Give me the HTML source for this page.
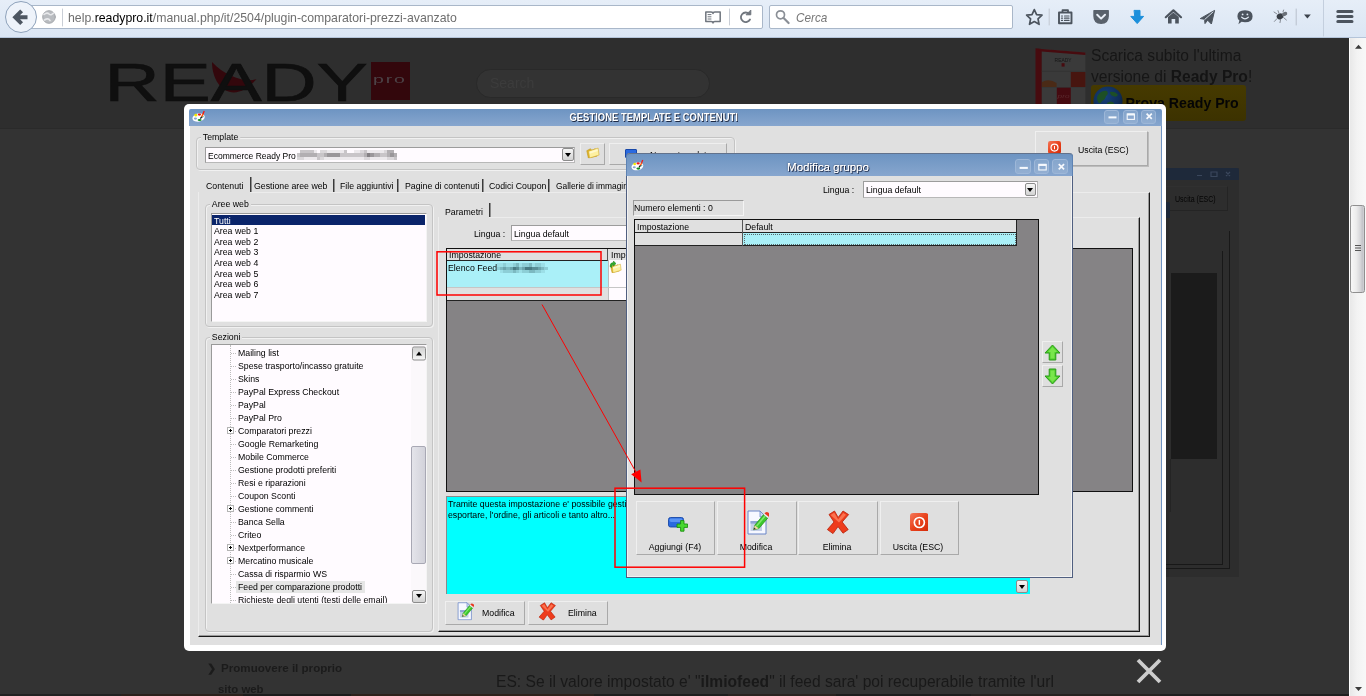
<!DOCTYPE html>
<html lang="it">
<head>
<meta charset="utf-8">
<title>Plugin comparatori prezzi avanzato</title>
<style>
*{box-sizing:border-box;margin:0;padding:0}
html,body{width:1366px;height:696px;overflow:hidden;background:#333;font-family:"Liberation Sans",sans-serif;}
.abs{position:absolute}
#root{position:relative;width:1366px;height:696px;overflow:hidden;background:#333;will-change:transform}
/* ---------- browser chrome ---------- */
#chrome{left:0;top:0;width:1366px;height:37.6px;background:linear-gradient(#e6eef8,#dbe6f4);border-bottom:1px solid #b4c4d9}
#urlbar{left:30px;top:5px;width:733px;height:24px;background:#fff;border:1px solid #a9b7c9;border-radius:2px}
#back{left:5px;top:1px;width:32px;height:32px;border-radius:50%;background:#eef3fa;border:1px solid #8ea2bb}
#url{left:68px;top:9.5px;font-size:13.4px;line-height:15px;color:#6e6e6e;white-space:nowrap;transform:scaleX(.918);transform-origin:0 50%}
#url b{color:#000;font-weight:normal}
#search{left:769px;top:5px;width:244px;height:24px;background:#fff;border:1px solid #a9b7c9;border-radius:2px}
#cerca{left:796px;top:9.5px;font-size:12.8px;line-height:15px;color:#777;font-style:italic;transform:scaleX(.92);transform-origin:0 50%}
/* ---------- page (dimmed) ---------- */
#hdr{left:0;top:37px;width:1349px;height:91.6px;background:#2e2e2e;border-bottom:1px solid #2a2a2a}
#vscroll{left:1349px;top:37px;width:17px;height:659px;background:linear-gradient(90deg,#fff 0,#fff 1px,#e9e9e9 1.5px,#f3f3f3 8px,#f8f8f8)}
#vthumb{left:1350.4px;top:204.7px;width:14.6px;height:88.8px;background:linear-gradient(90deg,#f7f7f7 0,#ececec 40%,#d6d6d9 72%,#c4c4c9 88%,#d2d2d6 100%);border:1px solid #8f8f8f;border-radius:2.5px}

/* page content (dimmed) */
#logo{left:100px;top:50px;width:320px;height:60px}
#probox{left:371px;top:61.6px;width:39px;height:38.4px;background:#33070c}
#probox span{position:absolute;left:2px;top:10.5px;font-size:11.6px;line-height:13px;color:#4c4246;letter-spacing:1.1px;transform:scaleX(1.68);transform-origin:0 0}
#sbox{left:476px;top:69px;width:234px;height:29px;border-radius:15px;background:#333;border:1px solid #292929}
#sbox span{position:absolute;left:13px;top:5px;font-size:14px;color:#3c3c3c}
#bn1{left:1091px;top:45px;font-size:15.6px;line-height:21px;color:#161616;white-space:nowrap}
#bn1 b{color:#141414}
#ybtn{left:1091.4px;top:85.3px;width:154.8px;height:35.4px;background:linear-gradient(#463a00,#3c3200);border-radius:3px}
#ybtn span{position:absolute;left:34.2px;top:9.7px;font-size:14.15px;line-height:17px;font-weight:bold;color:#050505;white-space:nowrap}
#globe{left:1093.2px;top:86.2px;width:30px;height:30px}
#pbox{left:1035px;top:48px;width:51px;height:60px}
#side1{left:221px;top:660.5px;font-size:11.6px;line-height:14px;font-weight:bold;color:#1b1b1b;white-space:nowrap}
#sidea{left:206.5px;top:660.5px;font-size:11px;line-height:14px;font-weight:bold;color:#1b1b1b}
#side2{left:218px;top:681.5px;font-size:11.4px;line-height:14px;font-weight:bold;color:#1b1b1b;white-space:nowrap}
#es{left:496px;top:672.6px;font-size:15.62px;color:#191919;white-space:nowrap}
#ttl1{text-align:center;overflow:visible}
#ttl1 span{display:inline-block;font-size:11.2px;font-weight:bold;color:#fff;white-space:nowrap;transform:scaleX(.845);transform-origin:50% 50%;text-shadow:1px 1px 0 #1f2b45,1px 0 0 rgba(31,43,69,.5);line-height:13px;margin:0 -60px}
#ttl2 span{font-size:11.5px;font-weight:normal;color:#fff;white-space:nowrap;text-shadow:1px 1px 0 #22304e,.4px 0 0 #fff,0 0 2px #2c3b5a;line-height:14px}
#lbx{left:1136px;top:658px;width:26px;height:26px}
#dim{left:1166px;top:168px;width:73px;height:409px;background:#2d2d2d;overflow:hidden}
/* ---------- lightbox ---------- */
#lb{left:184px;top:104px;width:982px;height:547px;background:#fff;border-radius:5px}
#win{left:190px;top:109px;width:971px;height:536.4px;background:#e0e0e0;overflow:hidden;font-size:11px;color:#000}
.t{position:absolute;white-space:nowrap;font-size:11px;line-height:13px;color:#000}

/* ---------- app windows ---------- */
.tb{background:linear-gradient(#6d94c2,#7a9dc8 50%,#87a6ce);}
.t{position:absolute;white-space:nowrap;font-size:9.6px;line-height:11px;color:#000;transform:scaleX(.912);transform-origin:0 50%}
.t.c{transform-origin:50% 50%}
.fs{position:absolute;border:1px solid #c4c4c4;border-radius:4px;box-shadow:inset 1px 1px 0 #f1f1f1,1px 1px 0 #f1f1f1}
.lg{position:absolute;background:#e0e0e0;padding:0 2px;font-size:9.6px;line-height:11px;white-space:nowrap;transform:scaleX(.912);transform-origin:0 50%}
.btn{position:absolute;background:#dfdfdf;border:1px solid;border-color:#efefef #a9a9a9 #a9a9a9 #efefef}
.wb{position:absolute;width:15px;height:14px;border:1px solid #9db7d8;border-radius:3px;background:rgba(255,255,255,.13)}
.sunk{position:absolute;border:1px solid;border-color:#9a9a9a #f4f4f4 #f4f4f4 #9a9a9a}
.white{background:#fffbff}
.vsep{position:absolute;width:2px;border-left:1px solid #3a3a3a;border-right:1px solid #8e8e8e}
.ddb{position:absolute;width:12px;height:13px;background:linear-gradient(#f6f6f6,#d2d2d2);border:1px solid #8c8c8c;border-radius:2px}
.ddb:after{content:"";position:absolute;left:calc(50% - 3px);top:calc(50% - 2px);border:3px solid transparent;border-top:4px solid #000;border-bottom:0}
</style>
</head>
<body>
<div id="root">

  <svg width="0" height="0" style="position:absolute">
    <defs>
      <symbol id="i-pal" viewBox="0 0 14 13">
        <ellipse cx="6.6" cy="7.6" rx="6.2" ry="4.1" transform="rotate(-12 6.6 7.6)" fill="#fff"/>
        <ellipse cx="3.4" cy="8.6" rx="1.6" ry="1.1" fill="#8aa6cc"/>
        <circle cx="3.8" cy="5.2" r="1.4" fill="#f2e800"/>
        <ellipse cx="7.4" cy="4.6" rx="1.7" ry="1.1" fill="#f01818"/>
        <ellipse cx="7.6" cy="10" rx="2" ry="1.1" fill="#128a22"/>
        <path d="M8.4 8.6 L10 6.4" stroke="#111" stroke-width="1.3"/>
        <path d="M9.8 6.8 L11.2 3.6" stroke="#ff5a10" stroke-width="1.6"/>
        <path d="M11 4 L12.2 1" stroke="#f01818" stroke-width="1.3"/>
        <path d="M10.6 7.6 L11.4 6.4" stroke="#10a0a0" stroke-width="1"/>
      </symbol>
      <symbol id="i-fold" viewBox="0 0 18 16">
        <path d="M1 6 L5.5 3.6 L7.6 5.4 L12 3.4 L13 5 L14 13 L3 15.4Z" fill="#e2b62a" stroke="#b89018" stroke-width=".7"/>
        <path d="M3.4 6.6 L15.6 2.6 L16.8 11.6 L4.6 15.4Z" fill="#fdf0a0" stroke="#d0a828" stroke-width=".7"/>
        <path d="M4.4 7.4 L14.8 4 L15.2 6.4 L4.8 9.8Z" fill="#fffad8" opacity=".8"/>
      </symbol>
      <symbol id="i-exit" viewBox="0 0 13 13">
        <defs><linearGradient id="gex" x1="0" y1="0" x2="1" y2="1"><stop offset="0" stop-color="#f5785a"/><stop offset=".5" stop-color="#e8421c"/><stop offset="1" stop-color="#d42a08"/></linearGradient></defs>
        <rect x="0" y="0" width="13" height="13" rx="2.2" fill="url(#gex)"/>
        <circle cx="6.5" cy="6.6" r="3.5" fill="none" stroke="#fff" stroke-width="1.15"/>
        <rect x="6" y="4.9" width="1" height="3.3" fill="#fff"/>
      </symbol>
      <symbol id="i-x" viewBox="0 0 24 24">
        <path d="M3 4.5 L8.5 1 L12.2 7.4 L17 1 L22.6 4.6 L16.2 12 L22.2 19.6 L17 23.2 L12 16.6 L7 23.6 L1.4 19.6 L8 12Z" fill="#ee3c1c" stroke="#b82008" stroke-width=".8" stroke-linejoin="round"/>
        <path d="M4.6 5 L8.2 2.8 L12.2 9.6 L17.2 3 L20 4.8 L13 12.6Z" fill="#ff8460" opacity=".75"/>
      </symbol>
      <symbol id="i-mod" viewBox="0 0 22 25">
        <path d="M1 1 H13 L19 7 V24 H1Z" fill="#f6f8ff" stroke="#6a86c8" stroke-width="1"/>
        <path d="M13 1 V7 H19Z" fill="#c8d6f2" stroke="#6a86c8" stroke-width=".8"/>
        <rect x="3.5" y="11" width="11.5" height="10" fill="#c4cfe8"/>
        <rect x="3.5" y="11" width="11.5" height="2.6" fill="#8ea4d4"/>
        <path d="M6.6 19.8 L7.8 15.2 L16.6 4.6 L20.8 8 L11.8 18.6Z" fill="#3cc82c" stroke="#1c8a14" stroke-width=".7"/>
        <path d="M9 15.6 L17.4 5.6 L18.6 6.6 L10.2 16.6Z" fill="#8ff07a" opacity=".8"/>
        <path d="M16.6 4.6 L17.6 3.4 L21.8 6.8 L20.8 8Z" fill="#f4f4f4" stroke="#aaa" stroke-width=".3"/>
        <path d="M17.6 3.4 L18.4 2.4 Q20 1.4 21.6 2.8 Q23 4.4 22.4 5.8 L21.8 6.8Z" fill="#e83820"/>
        <path d="M6.6 19.8 L7.8 15.2 L11.8 18.6Z" fill="#f0d8a0"/>
        <path d="M6.6 19.8 L7.2 17.6 L8.8 19Z" fill="#333"/>
      </symbol>
      <symbol id="i-add" viewBox="0 0 20 15">
        <rect x=".5" y=".5" width="15" height="9.5" rx="2" fill="#2a6ae0" stroke="#1848a8" stroke-width=".9"/>
        <rect x="1.6" y="1.4" width="12.8" height="3.6" rx="1.4" fill="#5a94f4"/>
        <path d="M12.6 3.6 H16 V7 H19.6 V10.4 H16 V14.2 H12.6 V10.4 H9 V7 H12.6Z" fill="#48d830" stroke="#1c9010" stroke-width=".9"/>
      </symbol>
    </defs>
  </svg>
  <div id="hdr" class="abs"></div>
  <div id="vscroll" class="abs"></div>
  <div id="vthumb" class="abs"></div>
  <svg class="abs" style="left:1349px;top:37px;width:17px;height:659px" viewBox="0 0 17 659"><path d="M6 11.8 L9.5 7.8 L13 11.8Z M6 650 L9.5 654 L13 650Z" fill="#3c3c3c"/><path d="M6 208.5 H12 M6 211 H12 M6 213.5 H12" stroke="#555" stroke-width="1"/></svg>

  <!-- dimmed page content -->
  <svg id="logo" class="abs" viewBox="100 50 320 60">
    <path d="M212 62 C212 88 234 106 256.5 79 C246 83 226 77 212 62Z" fill="#33070c"/>
    <text x="104.6" y="100.6" font-family="Liberation Sans, sans-serif" font-size="54" fill="#0f0f0f" stroke="#0f0f0f" stroke-width=".7" textLength="263" lengthAdjust="spacingAndGlyphs">READY</text>
  </svg>
  <div id="probox" class="abs"><span>pro</span></div>
  <div id="sbox" class="abs"><span>Search</span></div>
  <svg id="pbox" class="abs" viewBox="1035 48 51 60">
    <polygon points="1035.5,48.5 1041.8,49 1041.8,108 1035.5,108" fill="#470b0f"/>
    <polygon points="1041.8,49 1085.4,52.6 1085.4,108 1041.8,108" fill="#3a3a3a"/>
    <polygon points="1035.5,48.5 1085.4,52.4 1085.4,55 1041.8,51.6" fill="#470b0f"/>
    <rect x="1041.8" y="70.8" width="43.6" height="1" fill="#333"/>
    <rect x="1070.8" y="72" width="14.6" height="15" fill="#47150f"/>
    <path d="M1042 82 Q1049 78 1056.6 83 V87 H1042Z" fill="#4a2a16"/>
    <rect x="1056.8" y="87.2" width="14" height="20.8" fill="#450a10"/>
    <rect x="1041.8" y="87" width="43.6" height=".6" fill="#343434"/>
    <text x="1054.6" y="62.4" font-family="Liberation Sans, sans-serif" font-size="5.2" fill="#161616" textLength="17" lengthAdjust="spacingAndGlyphs">READY</text>
    <rect x="1061.6" y="63.2" width="3" height="3.4" fill="#470b0f"/>
    <text x="1057.6" y="97.6" font-family="Liberation Sans, sans-serif" font-size="6" font-style="italic" fill="#5a2a2e" textLength="12" lengthAdjust="spacingAndGlyphs">pro</text>
  </svg>
  <div id="bn1" class="abs">Scarica subito l'ultima<br>versione di <b>Ready Pro</b>!</div>
  <div id="ybtn" class="abs"><span>Prova Ready Pro</span></div>
  <svg id="globe" class="abs" viewBox="0 0 30 30"><defs><radialGradient id="gg" cx=".4" cy=".35" r=".7"><stop offset="0" stop-color="#16407a"/><stop offset=".7" stop-color="#0f2d58"/><stop offset="1" stop-color="#0a1c38"/></radialGradient></defs><circle cx="15" cy="15" r="14.6" fill="url(#gg)"/><path d="M5 9 Q9 4 14 5 Q16 8 13 10 Q12 14 9 15 Q7 19 5 16 Q3 12 5 9Z M17 6 Q22 5 25 9 Q23 12 20 10 Q17 9 17 6Z M14 17 Q18 14 21 17 Q22 22 18 26 Q15 24 14 17Z" fill="#1d4f26"/></svg>
  <div id="sidea" class="abs">&#10095;</div>
  <div id="side1" class="abs">Promuovere il proprio</div>
  <div id="side2" class="abs">sito web</div>
  <div id="es" class="abs">ES: Se il valore impostato e' "<b>ilmiofeed</b>" il feed sara' poi recuperabile tramite l'url</div>
  <svg id="lbx" class="abs" viewBox="0 0 26 26"><path d="M2 2 L24 24 M24 2 L2 24" stroke="#cdcdcd" stroke-width="3.8" fill="none"/></svg>
  <div class="abs" style="left:0;top:694px;width:1349px;height:2px;background:linear-gradient(90deg,#222 0,#222 9%,#2b211c 9%,#2b211c 18%,#1c1c1c 18%,#1c1c1c 26%,#2e221c 26%,#2e221c 44%,#1e1e1e 44%,#1e1e1e 54%,#2a2320 54%,#2a2320 62%,#1d1d1d 62%,#1d1d1d 72%,#262220 72%,#262220 86%,#1f1f1f 86%)"></div>
  <div id="dim" class="abs">
    <div class="abs" style="left:0;top:0;width:73px;height:12px;background:#1e293a;border-radius:0 2px 0 0"></div>
    <svg class="abs" style="left:28px;top:1px;width:40px;height:10px" viewBox="0 0 40 10"><path d="M3 6.5 H8 M17 3 H23 V7.5 H17Z M32 3 L36 7 M36 3 L32 7" stroke="#3a475c" stroke-width="1.2" fill="none"/></svg>
    <div class="abs" style="left:-40px;top:18px;width:102px;height:25px;border:1px solid #262626;border-color:#303030 #242424 #242424 #303030"></div>
    <div class="t" style="left:9px;top:25.5px;color:#050505;font-size:8.6px;transform:scaleX(.82)">Uscita (ESC)</div>
    <div class="abs" style="left:0;top:34px;width:4px;height:16px;background:#1c2738;border-radius:0 2px 0 0"></div>
    <div class="abs" style="left:0;top:50px;width:3px;height:360px;background:#2a2a2a"></div>
    <div class="abs" style="left:63px;top:63px;width:1px;height:338px;background:#181818"></div>
    <div class="abs" style="left:-10px;top:400px;width:74px;height:1px;background:#181818"></div>
    <div class="abs" style="left:56px;top:83px;width:1px;height:314px;background:#181818"></div>
    <div class="abs" style="left:-10px;top:396px;width:67px;height:1px;background:#181818"></div>
    <div class="abs" style="left:4.5px;top:105px;width:46.5px;height:186px;background:#1b1b1b"></div>
    <div class="abs" style="left:0;top:291px;width:5px;height:53px;background:#2a2a2a;border-right:1px solid #242424"></div>
  </div>
  <div id="chrome" class="abs">
    <div id="urlbar" class="abs"></div>
    <div id="back" class="abs"></div>
    <div id="url" class="abs">help.<b>readypro.it</b>/manual.php/it/2504/plugin-comparatori-prezzi-avanzato</div>
    <div id="search" class="abs"></div>
    <div id="cerca" class="abs">Cerca</div>
    <svg class="abs" style="left:0;top:0;width:1366px;height:37px" viewBox="0 0 1366 37">
      <g fill="none" stroke="#4c545e" stroke-width="1.6" stroke-linejoin="round" stroke-linecap="round">
        <!-- back arrow -->
        <path d="M27.5 17.2 H16.5 M21.6 10.8 L15.2 17.2 L21.6 23.6" stroke-width="4" stroke="#4d5661" stroke-linecap="butt" stroke-linejoin="miter"/>
        <!-- globe -->
        <circle cx="49" cy="17" r="6.3" fill="#b9bcc0" stroke="#a7aaae" stroke-width="1"/>
        <path d="M44 14.5 Q47 12 49 14 T53.5 13 M44.5 20 Q48 17.5 50 20.5" stroke="#e8e9eb" stroke-width="1.6"/>
        <path d="M62.5 9 V26" stroke="#c9ced6" stroke-width="1"/>
        <!-- reader -->
        <path d="M705.8 12 H711 Q713 12 713 13.5 Q713 12 715 12 H720.2 V21.5 H715 Q713 21.5 713 23 Q713 21.5 711 21.5 H705.8Z" stroke-width="1.5" stroke="#70767e"/>
        <path d="M708 14.6 H711 M708 16.8 H711 M708 19 H711" stroke-width="1" stroke="#70767e"/>
        <path d="M729.5 9 V25" stroke="#c9ced6" stroke-width="1"/>
        <!-- reload -->
        <path d="M749.2 14 A4.8 4.8 0 1 0 750 19.5" stroke="#70767e" stroke-width="1.8"/>
        <path d="M746.4 14.8 H750.8 V10.4Z" fill="#70767e" stroke="#70767e" stroke-width="1"/>
        <!-- magnifier -->
        <circle cx="780.5" cy="14.8" r="4" stroke="#8a8f96" stroke-width="1.7"/>
        <path d="M783.6 18 L788.6 23" stroke="#8a8f96" stroke-width="2.2"/>
        <!-- star -->
        <path d="M1034.3 9.6 L1036.6 14.6 L1042 15.2 L1038 18.9 L1039.1 24.3 L1034.3 21.6 L1029.5 24.3 L1030.6 18.9 L1026.6 15.2 L1032 14.6Z" stroke-width="1.7"/>
        <path d="M1049.2 9 V25" stroke="#c3c9d2" stroke-width="1"/>
        <!-- clipboard -->
        <path d="M1059 12.5 H1071.5 V23.3 H1059Z" stroke-width="1.9"/>
        <path d="M1062.5 12 V10.2 H1068 V12" stroke-width="1.8"/>
        <path d="M1061.5 16 H1062.5 M1064.5 16 H1069 M1061.5 18.2 H1062.5 M1064.5 18.2 H1069 M1061.5 20.4 H1062.5 M1064.5 20.4 H1069" stroke-width="1.2"/>
        <!-- pocket -->
        <path d="M1094 10.6 H1108.2 V16 Q1108.2 23.2 1101.1 23.2 Q1094 23.2 1094 16Z" fill="#59616b" stroke="#59616b" stroke-width="1.4"/>
        <path d="M1097.2 14.8 L1101.1 18.6 L1105 14.8" stroke="#e8eef6" stroke-width="2"/>
        <!-- download -->
        <path d="M1134.4 10.4 H1140 V16.4 H1143.6 L1137.2 23.6 L1130.8 16.4 H1134.4Z" fill="#1b8fdb" stroke="#1b8fdb" stroke-width="1"/>
        <!-- home -->
        <path d="M1165.8 17.2 L1173.4 10.4 L1181 17.2" stroke-width="2.2"/>
        <path d="M1168 17 L1173.4 12.6 L1178.8 17 V23.6 H1175.2 V19 H1171.6 V23.6 H1168Z" fill="#4c545e" stroke="none"/>
        <!-- send -->
        <path d="M1200.6 18.4 L1214.6 10.4 L1211.4 24 L1207.6 20.2 L1205 23.6 L1204.6 19.6Z" fill="#4c545e" stroke="#4c545e" stroke-width="1"/>
        <path d="M1204.8 19.4 L1213 12" stroke="#e3ecf6" stroke-width=".9"/>
        <!-- chat -->
        <path d="M1245 10.2 Q1252.6 10.2 1252.6 16.2 Q1252.6 22.2 1245 22.2 Q1243 22.2 1241.6 21.8 L1238.4 24.2 L1239.4 20.6 Q1237.4 19 1237.4 16.2 Q1237.4 10.2 1245 10.2Z" fill="#4c545e" stroke="none"/>
        <path d="M1241.6 17.2 Q1245 20.6 1248.4 17.2" stroke="#e3ecf6" stroke-width="1.2"/>
        <circle cx="1242.6" cy="14.4" r=".9" fill="#e3ecf6" stroke="none"/><circle cx="1247.4" cy="14.4" r=".9" fill="#e3ecf6" stroke="none"/>
        <!-- bug -->
        <ellipse cx="1280" cy="16.4" rx="3.4" ry="2.8" fill="#3a3f46" stroke="none" transform="rotate(-25 1280 16.4)"/>
        <ellipse cx="1284.6" cy="14" rx="2.8" ry="2" fill="#6a7078" stroke="none" transform="rotate(-25 1284.6 14)"/>
        <path d="M1277 14 L1274 12 M1277 18.6 L1274.4 21.4 M1280.6 19.4 L1280 22.6 M1279 13.4 L1278 10.6 M1283.6 17.6 L1286.4 20 M1283 11.8 L1283.6 10" stroke="#7a8088" stroke-width=".9"/>
        <path d="M1296.2 9 V25" stroke="#b8c0cc" stroke-width="1"/>
        <path d="M1304 14.6 H1310.8 L1307.4 18.6Z" fill="#3c434c" stroke="none"/>
        <path d="M1323.5 0 V36" stroke="#c4cfde" stroke-width="1"/>
        <!-- hamburger -->
        <path d="M1337.8 11.6 H1352 M1337.8 16.6 H1352 M1337.8 21.6 H1352" stroke-width="3"/>
        <!-- scroll arrows -->
      </g>
    </svg>
  </div>
  <div id="lb" class="abs"></div>
  <div id="win" class="abs"></div>

  <!-- main window -->
  <div class="abs tb" style="left:189px;top:109px;width:973px;height:17.2px;border-radius:2px 2px 0 0"></div>
  <div class="abs" style="left:1160.8px;top:126px;width:1.2px;height:519.4px;background:#6f93c2"></div>
  <div class="abs" id="ttl1" style="left:569px;top:107.2px;width:170px;height:13px"><span>GESTIONE TEMPLATE E CONTENUTI</span></div>
  <div class="wb" style="left:1104px;top:110px"></div>
  <div class="wb" style="left:1123px;top:110px"></div>
  <div class="wb" style="left:1141px;top:110px"></div>
  <div class="fs" style="left:196px;top:137px;width:539px;height:33px"></div>
  <div class="lg" style="left:201px;top:131px">Template</div>
  <div class="sunk white" style="left:205px;top:146.7px;width:370px;height:16px;border-color:#9c9c9c #b8b8b8 #b8b8b8 #9c9c9c"></div>
  <div class="t" style="left:208px;top:149.6px;transform:scaleX(.885)">Ecommerce Ready Pro</div>
  <div class="ddb" style="left:562px;top:148px"></div>
  <div class="btn" style="left:580px;top:143px;width:25px;height:22px"></div>
  <div class="btn" style="left:609px;top:143px;width:118px;height:22px"></div>
  <div class="t" style="left:650px;top:149.3px">Nuovo template</div>
  <div class="btn" style="left:1034.5px;top:131px;width:113.5px;height:35px;box-shadow:1px 1px 0 #bcbcbc"></div>
  <div class="t" style="left:1078px;top:144px">Uscita (ESC)</div>
  <div class="t" style="left:206px;top:180px">Contenuti</div>
  <div class="t" style="left:254px;top:180px">Gestione aree web</div>
  <div class="t" style="left:340px;top:180px">File aggiuntivi</div>
  <div class="t" style="left:404.5px;top:180px">Pagine di contenuti</div>
  <div class="t" style="left:488.5px;top:180px">Codici Coupon</div>
  <div class="t" style="left:556px;top:180px;transform:scaleX(.875)">Gallerie di immagini</div>
  <div class="vsep" style="left:250px;top:177px;height:15px"></div>
  <div class="vsep" style="left:333px;top:179px;height:13px"></div>
  <div class="vsep" style="left:397px;top:179px;height:13px"></div>
  <div class="vsep" style="left:482px;top:179px;height:13px"></div>
  <div class="vsep" style="left:548px;top:179px;height:13px"></div>
  <div class="abs" style="left:198px;top:192px;width:952px;height:444.5px;border:1px solid;border-color:#ececec #1a1a1a #1a1a1a #ececec;box-shadow:inset -1px -1px 0 #9a9a9a"></div>
  <div class="abs" style="left:199px;top:190px;width:51px;height:4px;background:#e0e0e0"></div>
  <div class="fs" style="left:205px;top:204px;width:228px;height:123px"></div>
  <div class="lg" style="left:210px;top:198px">Aree web</div>
  <div class="sunk white" style="left:211px;top:213px;width:216px;height:109px"></div>
  <div class="abs" style="left:212px;top:215px;width:213px;height:10px;background:#0a246a"></div>
  <div class="t" style="left:213.5px;top:214.5px;color:#fff">Tutti</div>
  <div class="t" style="left:213.5px;top:225.1px">Area web 1</div>
  <div class="t" style="left:213.5px;top:235.7px">Area web 2</div>
  <div class="t" style="left:213.5px;top:246.3px">Area web 3</div>
  <div class="t" style="left:213.5px;top:256.9px">Area web 4</div>
  <div class="t" style="left:213.5px;top:267.5px">Area web 5</div>
  <div class="t" style="left:213.5px;top:278.1px">Area web 6</div>
  <div class="t" style="left:213.5px;top:288.7px">Area web 7</div>
  <div class="fs" style="left:205px;top:337px;width:228px;height:294.5px"></div>
  <div class="lg" style="left:210px;top:331px">Sezioni</div>
  <div class="sunk white" style="left:211px;top:344px;width:216px;height:260px;overflow:hidden" id="tree">
  <div class="abs" style="left:18px;top:0;width:0;height:260px;border-left:1px dotted #bdbdbd"></div>
  <div class="abs" style="left:19px;top:7.7px;width:5px;height:0;border-top:1px dotted #bdbdbd"></div>
  <div class="t" style="left:26px;top:2.2px">Mailing list</div>
  <div class="abs" style="left:19px;top:20.7px;width:5px;height:0;border-top:1px dotted #bdbdbd"></div>
  <div class="t" style="left:26px;top:15.2px">Spese trasporto/incasso gratuite</div>
  <div class="abs" style="left:19px;top:33.7px;width:5px;height:0;border-top:1px dotted #bdbdbd"></div>
  <div class="t" style="left:26px;top:28.2px">Skins</div>
  <div class="abs" style="left:19px;top:46.7px;width:5px;height:0;border-top:1px dotted #bdbdbd"></div>
  <div class="t" style="left:26px;top:41.2px">PayPal Express Checkout</div>
  <div class="abs" style="left:19px;top:59.7px;width:5px;height:0;border-top:1px dotted #bdbdbd"></div>
  <div class="t" style="left:26px;top:54.2px">PayPal</div>
  <div class="abs" style="left:19px;top:72.7px;width:5px;height:0;border-top:1px dotted #bdbdbd"></div>
  <div class="t" style="left:26px;top:67.2px">PayPal Pro</div>
  <div class="abs" style="left:19px;top:85.7px;width:5px;height:0;border-top:1px dotted #bdbdbd"></div>
  <div class="abs" style="left:15px;top:82.2px;width:7px;height:7px;background:#fff;border:1px solid #b4b4b4"></div>
  <div class="abs" style="left:17px;top:85.2px;width:3px;height:1px;background:#000"></div>
  <div class="abs" style="left:18px;top:84.2px;width:1px;height:3px;background:#000"></div>
  <div class="t" style="left:26px;top:80.2px">Comparatori prezzi</div>
  <div class="abs" style="left:19px;top:98.7px;width:5px;height:0;border-top:1px dotted #bdbdbd"></div>
  <div class="t" style="left:26px;top:93.2px">Google Remarketing</div>
  <div class="abs" style="left:19px;top:111.7px;width:5px;height:0;border-top:1px dotted #bdbdbd"></div>
  <div class="t" style="left:26px;top:106.2px">Mobile Commerce</div>
  <div class="abs" style="left:19px;top:124.7px;width:5px;height:0;border-top:1px dotted #bdbdbd"></div>
  <div class="t" style="left:26px;top:119.2px">Gestione prodotti preferiti</div>
  <div class="abs" style="left:19px;top:137.7px;width:5px;height:0;border-top:1px dotted #bdbdbd"></div>
  <div class="t" style="left:26px;top:132.2px">Resi e riparazioni</div>
  <div class="abs" style="left:19px;top:150.7px;width:5px;height:0;border-top:1px dotted #bdbdbd"></div>
  <div class="t" style="left:26px;top:145.2px">Coupon Sconti</div>
  <div class="abs" style="left:19px;top:163.7px;width:5px;height:0;border-top:1px dotted #bdbdbd"></div>
  <div class="abs" style="left:15px;top:160.2px;width:7px;height:7px;background:#fff;border:1px solid #b4b4b4"></div>
  <div class="abs" style="left:17px;top:163.2px;width:3px;height:1px;background:#000"></div>
  <div class="abs" style="left:18px;top:162.2px;width:1px;height:3px;background:#000"></div>
  <div class="t" style="left:26px;top:158.2px">Gestione commenti</div>
  <div class="abs" style="left:19px;top:176.7px;width:5px;height:0;border-top:1px dotted #bdbdbd"></div>
  <div class="t" style="left:26px;top:171.2px">Banca Sella</div>
  <div class="abs" style="left:19px;top:189.7px;width:5px;height:0;border-top:1px dotted #bdbdbd"></div>
  <div class="t" style="left:26px;top:184.2px">Criteo</div>
  <div class="abs" style="left:19px;top:202.7px;width:5px;height:0;border-top:1px dotted #bdbdbd"></div>
  <div class="abs" style="left:15px;top:199.2px;width:7px;height:7px;background:#fff;border:1px solid #b4b4b4"></div>
  <div class="abs" style="left:17px;top:202.2px;width:3px;height:1px;background:#000"></div>
  <div class="abs" style="left:18px;top:201.2px;width:1px;height:3px;background:#000"></div>
  <div class="t" style="left:26px;top:197.2px">Nextperformance</div>
  <div class="abs" style="left:19px;top:215.7px;width:5px;height:0;border-top:1px dotted #bdbdbd"></div>
  <div class="abs" style="left:15px;top:212.2px;width:7px;height:7px;background:#fff;border:1px solid #b4b4b4"></div>
  <div class="abs" style="left:17px;top:215.2px;width:3px;height:1px;background:#000"></div>
  <div class="abs" style="left:18px;top:214.2px;width:1px;height:3px;background:#000"></div>
  <div class="t" style="left:26px;top:210.2px">Mercatino musicale</div>
  <div class="abs" style="left:19px;top:228.7px;width:5px;height:0;border-top:1px dotted #bdbdbd"></div>
  <div class="t" style="left:26px;top:223.2px">Cassa di risparmio WS</div>
  <div class="abs" style="left:24px;top:235.7px;width:129px;height:12px;background:#e6e6e6"></div>
  <div class="abs" style="left:19px;top:241.7px;width:5px;height:0;border-top:1px dotted #bdbdbd"></div>
  <div class="t" style="left:26px;top:236.2px">Feed per comparazione prodotti</div>
  <div class="abs" style="left:19px;top:254.7px;width:5px;height:0;border-top:1px dotted #bdbdbd"></div>
  <div class="t" style="left:26px;top:249.2px">Richieste degli utenti (testi delle email)</div>
  <div class="abs" style="left:199px;top:0;width:16px;height:259px;background:#fbf8fb"></div>
  <div class="abs" style="left:199px;top:101px;width:15px;height:118px;background:linear-gradient(90deg,#e4e4ea,#d2d2da);border:1px solid #a8a8b4;border-radius:2px"></div>
  <div class="ddb" style="left:199.5px;top:1.5px;width:14px;height:13.5px;transform:rotate(180deg)"></div>
  <div class="ddb" style="left:199.5px;top:244.5px;width:14px;height:13.5px"></div>
  </div>
  <div class="t" style="left:445px;top:205.5px">Parametri</div>
  <div class="vsep" style="left:489px;top:203px;height:14px"></div>
  <div class="abs" style="left:438px;top:217px;width:702px;height:415px;border:1px solid;border-color:#ececec #1a1a1a #1a1a1a #ececec;box-shadow:inset -1px -1px 0 #9a9a9a"></div>
  <div class="abs" style="left:439px;top:215px;width:50px;height:4px;background:#e0e0e0"></div>
  <div class="t" style="left:474px;top:228px">Lingua :</div>
  <div class="sunk white" style="left:511px;top:224.5px;width:180px;height:16.5px;border-color:#9c9c9c #b8b8b8 #b8b8b8 #9c9c9c"></div>
  <div class="t" style="left:514px;top:228px">Lingua default</div>
  <div class="abs" style="left:446px;top:247.5px;width:687px;height:244px;background:#858385;border:1px solid #111"></div>
  <div class="abs" style="left:447px;top:248.5px;width:161px;height:12.5px;background:#e0e0e0;border-bottom:1px solid #222;border-right:1px solid #555"></div>
  <div class="abs" style="left:608px;top:248.5px;width:30px;height:12.5px;background:#e0e0e0;border-bottom:1px solid #222"></div>
  <div class="t" style="left:448.5px;top:249px">Impostazione</div>
  <div class="t" style="left:611px;top:249px">Imp</div>
  <div class="abs" style="left:447px;top:261px;width:161px;height:26px;background:#aaf0f8"></div>
  <div class="abs" style="left:608px;top:260px;width:30px;height:40px;background:#fffbff;border-left:1px solid #bdbdbd"></div>
  <div class="abs" style="left:447px;top:287px;width:161px;height:13px;background:#e0e0e0;border-top:1px solid #c6c6c6"></div>
  <div class="abs" style="left:608px;top:287px;width:30px;height:1px;background:#c6c6c6"></div>
  <div class="abs" style="left:447px;top:299.5px;width:190px;height:1px;background:#222"></div>
  <div class="t" style="left:447.8px;top:262px">Elenco Feed</div>
  <div class="abs" style="left:446px;top:495.5px;width:584px;height:98.5px;background:#00ffff;border-top:1px solid #8a8a8a;border-left:1px solid #8a8a8a"></div>
  <div class="t" style="left:447.5px;top:498px">Tramite questa impostazione e' possibile gestire</div>
  <div class="t" style="left:447.5px;top:509px">esportare, l'ordine, gli articoli e tanto altro...</div>
  <div class="ddb" style="left:1016px;top:580px"></div>
  <div class="btn" style="left:445px;top:601px;width:80px;height:24px"></div>
  <div class="t" style="left:481.5px;top:607px">Modifica</div>
  <div class="btn" style="left:528px;top:601px;width:80px;height:24px"></div>
  <div class="t" style="left:567.5px;top:607px">Elimina</div>

  <!-- blurred (pixelated) private text placeholders -->
  <svg class="abs" style="left:297px;top:150px;width:100px;height:10px" viewBox="0 0 100 10" shape-rendering="crispEdges"><rect x="3.33" y="0.00" width="3.63" height="3.63" fill="#c8c5c8"/><rect x="6.67" y="0.00" width="3.63" height="3.63" fill="#c8c5c8"/><rect x="10.00" y="0.00" width="3.63" height="3.63" fill="#c8c5c8"/><rect x="13.33" y="0.00" width="3.63" height="3.63" fill="#c8c5c8"/><rect x="16.67" y="0.00" width="3.63" height="3.63" fill="#ece9ec"/><rect x="23.33" y="0.00" width="3.63" height="3.63" fill="#dad7da"/><rect x="26.67" y="0.00" width="3.63" height="3.63" fill="#dad7da"/><rect x="30.00" y="0.00" width="3.63" height="3.63" fill="#ece9ec"/><rect x="33.33" y="0.00" width="3.63" height="3.63" fill="#ece9ec"/><rect x="36.67" y="0.00" width="3.63" height="3.63" fill="#ece9ec"/><rect x="40.00" y="0.00" width="3.63" height="3.63" fill="#ece9ec"/><rect x="43.33" y="0.00" width="3.63" height="3.63" fill="#ece9ec"/><rect x="46.67" y="0.00" width="3.63" height="3.63" fill="#c8c5c8"/><rect x="56.67" y="0.00" width="3.63" height="3.63" fill="#ece9ec"/><rect x="60.00" y="0.00" width="3.63" height="3.63" fill="#ece9ec"/><rect x="63.33" y="0.00" width="3.63" height="3.63" fill="#dad7da"/><rect x="66.67" y="0.00" width="3.63" height="3.63" fill="#c8c5c8"/><rect x="70.00" y="0.00" width="3.63" height="3.63" fill="#ece9ec"/><rect x="73.33" y="0.00" width="3.63" height="3.63" fill="#ece9ec"/><rect x="76.67" y="0.00" width="3.63" height="3.63" fill="#ece9ec"/><rect x="80.00" y="0.00" width="3.63" height="3.63" fill="#ece9ec"/><rect x="83.33" y="0.00" width="3.63" height="3.63" fill="#ece9ec"/><rect x="86.67" y="0.00" width="3.63" height="3.63" fill="#dad7da"/><rect x="90.00" y="0.00" width="3.63" height="3.63" fill="#b2afb2"/><rect x="93.33" y="0.00" width="3.63" height="3.63" fill="#b2afb2"/><rect x="0.00" y="3.33" width="3.63" height="3.63" fill="#c8c5c8"/><rect x="3.33" y="3.33" width="3.63" height="3.63" fill="#b2afb2"/><rect x="6.67" y="3.33" width="3.63" height="3.63" fill="#b2afb2"/><rect x="10.00" y="3.33" width="3.63" height="3.63" fill="#b2afb2"/><rect x="13.33" y="3.33" width="3.63" height="3.63" fill="#b2afb2"/><rect x="16.67" y="3.33" width="3.63" height="3.63" fill="#b2afb2"/><rect x="20.00" y="3.33" width="3.63" height="3.63" fill="#c8c5c8"/><rect x="23.33" y="3.33" width="3.63" height="3.63" fill="#c8c5c8"/><rect x="26.67" y="3.33" width="3.63" height="3.63" fill="#b2afb2"/><rect x="30.00" y="3.33" width="3.63" height="3.63" fill="#9a979a"/><rect x="33.33" y="3.33" width="3.63" height="3.63" fill="#9a979a"/><rect x="36.67" y="3.33" width="3.63" height="3.63" fill="#9a979a"/><rect x="40.00" y="3.33" width="3.63" height="3.63" fill="#9a979a"/><rect x="43.33" y="3.33" width="3.63" height="3.63" fill="#c8c5c8"/><rect x="46.67" y="3.33" width="3.63" height="3.63" fill="#c8c5c8"/><rect x="50.00" y="3.33" width="3.63" height="3.63" fill="#c8c5c8"/><rect x="53.33" y="3.33" width="3.63" height="3.63" fill="#c8c5c8"/><rect x="56.67" y="3.33" width="3.63" height="3.63" fill="#c8c5c8"/><rect x="60.00" y="3.33" width="3.63" height="3.63" fill="#c8c5c8"/><rect x="63.33" y="3.33" width="3.63" height="3.63" fill="#c8c5c8"/><rect x="66.67" y="3.33" width="3.63" height="3.63" fill="#b2afb2"/><rect x="70.00" y="3.33" width="3.63" height="3.63" fill="#848184"/><rect x="73.33" y="3.33" width="3.63" height="3.63" fill="#9a979a"/><rect x="76.67" y="3.33" width="3.63" height="3.63" fill="#b2afb2"/><rect x="80.00" y="3.33" width="3.63" height="3.63" fill="#b2afb2"/><rect x="83.33" y="3.33" width="3.63" height="3.63" fill="#c8c5c8"/><rect x="86.67" y="3.33" width="3.63" height="3.63" fill="#c8c5c8"/><rect x="90.00" y="3.33" width="3.63" height="3.63" fill="#b2afb2"/><rect x="93.33" y="3.33" width="3.63" height="3.63" fill="#9a979a"/><rect x="96.67" y="3.33" width="3.63" height="3.63" fill="#b2afb2"/><rect x="0.00" y="6.67" width="3.63" height="3.63" fill="#dad7da"/><rect x="3.33" y="6.67" width="3.63" height="3.63" fill="#dad7da"/><rect x="6.67" y="6.67" width="3.63" height="3.63" fill="#ece9ec"/><rect x="10.00" y="6.67" width="3.63" height="3.63" fill="#ece9ec"/><rect x="13.33" y="6.67" width="3.63" height="3.63" fill="#ece9ec"/><rect x="16.67" y="6.67" width="3.63" height="3.63" fill="#ece9ec"/><rect x="20.00" y="6.67" width="3.63" height="3.63" fill="#c8c5c8"/><rect x="23.33" y="6.67" width="3.63" height="3.63" fill="#dad7da"/><rect x="26.67" y="6.67" width="3.63" height="3.63" fill="#ece9ec"/><rect x="30.00" y="6.67" width="3.63" height="3.63" fill="#ece9ec"/><rect x="33.33" y="6.67" width="3.63" height="3.63" fill="#ece9ec"/><rect x="36.67" y="6.67" width="3.63" height="3.63" fill="#ece9ec"/><rect x="40.00" y="6.67" width="3.63" height="3.63" fill="#ece9ec"/><rect x="43.33" y="6.67" width="3.63" height="3.63" fill="#ece9ec"/><rect x="46.67" y="6.67" width="3.63" height="3.63" fill="#ece9ec"/><rect x="50.00" y="6.67" width="3.63" height="3.63" fill="#ece9ec"/><rect x="53.33" y="6.67" width="3.63" height="3.63" fill="#ece9ec"/><rect x="56.67" y="6.67" width="3.63" height="3.63" fill="#ece9ec"/><rect x="60.00" y="6.67" width="3.63" height="3.63" fill="#ece9ec"/><rect x="63.33" y="6.67" width="3.63" height="3.63" fill="#ece9ec"/><rect x="66.67" y="6.67" width="3.63" height="3.63" fill="#dad7da"/><rect x="70.00" y="6.67" width="3.63" height="3.63" fill="#dad7da"/><rect x="73.33" y="6.67" width="3.63" height="3.63" fill="#ece9ec"/><rect x="76.67" y="6.67" width="3.63" height="3.63" fill="#ece9ec"/><rect x="80.00" y="6.67" width="3.63" height="3.63" fill="#ece9ec"/><rect x="83.33" y="6.67" width="3.63" height="3.63" fill="#ece9ec"/><rect x="86.67" y="6.67" width="3.63" height="3.63" fill="#ece9ec"/><rect x="90.00" y="6.67" width="3.63" height="3.63" fill="#dad7da"/><rect x="93.33" y="6.67" width="3.63" height="3.63" fill="#dad7da"/><rect x="96.67" y="6.67" width="3.63" height="3.63" fill="#c8c5c8"/></svg>
  <svg class="abs" style="left:497px;top:262.6px;width:50.5px;height:10.5px" viewBox="0 0 50.5 10.5" shape-rendering="crispEdges"><rect x="0.00" y="0.00" width="3.46" height="3.80" fill="#9cdfe7"/><rect x="3.16" y="0.00" width="3.46" height="3.80" fill="#9cdfe7"/><rect x="6.31" y="0.00" width="3.46" height="3.80" fill="#8dced6"/><rect x="9.47" y="0.00" width="3.46" height="3.80" fill="#9cdfe7"/><rect x="12.62" y="0.00" width="3.46" height="3.80" fill="#9cdfe7"/><rect x="15.78" y="0.00" width="3.46" height="3.80" fill="#8dced6"/><rect x="18.94" y="0.00" width="3.46" height="3.80" fill="#7cb9c1"/><rect x="22.09" y="0.00" width="3.46" height="3.80" fill="#9cdfe7"/><rect x="25.25" y="0.00" width="3.46" height="3.80" fill="#8dced6"/><rect x="28.41" y="0.00" width="3.46" height="3.80" fill="#8dced6"/><rect x="31.56" y="0.00" width="3.46" height="3.80" fill="#7cb9c1"/><rect x="34.72" y="0.00" width="3.46" height="3.80" fill="#9cdfe7"/><rect x="37.88" y="0.00" width="3.46" height="3.80" fill="#8dced6"/><rect x="41.03" y="0.00" width="3.46" height="3.80" fill="#8dced6"/><rect x="44.19" y="0.00" width="3.46" height="3.80" fill="#9cdfe7"/><rect x="0.00" y="3.50" width="3.46" height="3.80" fill="#8dced6"/><rect x="3.16" y="3.50" width="3.46" height="3.80" fill="#7cb9c1"/><rect x="6.31" y="3.50" width="3.46" height="3.80" fill="#6ba5ad"/><rect x="9.47" y="3.50" width="3.46" height="3.80" fill="#7cb9c1"/><rect x="12.62" y="3.50" width="3.46" height="3.80" fill="#6ba5ad"/><rect x="15.78" y="3.50" width="3.46" height="3.80" fill="#497c84"/><rect x="18.94" y="3.50" width="3.46" height="3.80" fill="#5a9098"/><rect x="22.09" y="3.50" width="3.46" height="3.80" fill="#7cb9c1"/><rect x="25.25" y="3.50" width="3.46" height="3.80" fill="#6ba5ad"/><rect x="28.41" y="3.50" width="3.46" height="3.80" fill="#497c84"/><rect x="31.56" y="3.50" width="3.46" height="3.80" fill="#497c84"/><rect x="34.72" y="3.50" width="3.46" height="3.80" fill="#5a9098"/><rect x="37.88" y="3.50" width="3.46" height="3.80" fill="#5a9098"/><rect x="41.03" y="3.50" width="3.46" height="3.80" fill="#6ba5ad"/><rect x="44.19" y="3.50" width="3.46" height="3.80" fill="#7cb9c1"/><rect x="47.34" y="3.50" width="3.46" height="3.80" fill="#8dced6"/><rect x="3.16" y="7.00" width="3.46" height="3.80" fill="#9cdfe7"/><rect x="6.31" y="7.00" width="3.46" height="3.80" fill="#8dced6"/><rect x="9.47" y="7.00" width="3.46" height="3.80" fill="#8dced6"/><rect x="12.62" y="7.00" width="3.46" height="3.80" fill="#8dced6"/><rect x="15.78" y="7.00" width="3.46" height="3.80" fill="#7cb9c1"/><rect x="18.94" y="7.00" width="3.46" height="3.80" fill="#8dced6"/><rect x="22.09" y="7.00" width="3.46" height="3.80" fill="#9cdfe7"/><rect x="25.25" y="7.00" width="3.46" height="3.80" fill="#8dced6"/><rect x="28.41" y="7.00" width="3.46" height="3.80" fill="#8dced6"/><rect x="31.56" y="7.00" width="3.46" height="3.80" fill="#7cb9c1"/><rect x="34.72" y="7.00" width="3.46" height="3.80" fill="#7cb9c1"/><rect x="37.88" y="7.00" width="3.46" height="3.80" fill="#8dced6"/><rect x="41.03" y="7.00" width="3.46" height="3.80" fill="#8dced6"/><rect x="44.19" y="7.00" width="3.46" height="3.80" fill="#9cdfe7"/></svg>
  <!-- icons main -->
  <svg class="abs" style="left:191.5px;top:109.5px;width:14px;height:13px"><use href="#i-pal"/></svg>
  <svg class="abs" style="left:585.5px;top:146px;width:14px;height:12.5px"><use href="#i-fold"/></svg>
  <svg class="abs" style="left:609.5px;top:261.5px;width:12px;height:11.5px"><use href="#i-fold"/></svg><svg class="abs" style="left:609px;top:260.5px;width:7px;height:8px" viewBox="0 0 7 8"><path d="M1 5.5 Q1 1.5 4.5 1.5 L4.5 0 L7 2.6 L4.5 5 L4.5 3.4 Q2.8 3.4 2.6 6.5Z" fill="#2fae2a" stroke="#1a7a18" stroke-width=".5"/></svg>
  <svg class="abs" style="left:1048px;top:141px;width:13px;height:13px"><use href="#i-exit"/></svg>
  <div class="abs" style="left:625px;top:149px;width:12px;height:9px;background:#2a6ae0;border:1px solid #1848a8;border-radius:1px"></div>
  <svg class="abs" style="left:456.5px;top:602px;width:17px;height:18.5px"><use href="#i-mod"/></svg>
  <svg class="abs" style="left:538px;top:602px;width:18.5px;height:18.5px"><use href="#i-x"/></svg>
  <svg class="abs" style="left:1103.5px;top:109.2px;width:56px;height:16px" viewBox="0 0 56 16"><rect x="4.5" y="7.4" width="8" height="2" fill="#f6f9fd"/><rect x="23.2" y="5" width="7.2" height="5.4" fill="none" stroke="#f6f9fd" stroke-width="1.1"/><rect x="23.2" y="4.5" width="7.2" height="2" fill="#f6f9fd"/><path d="M42.6 4.6 L47.8 9.8 M47.8 4.6 L42.6 9.8" stroke="#f6f9fd" stroke-width="1.7"/></svg>

  <!-- window 2 -->
  <div class="abs" style="left:626px;top:153.4px;width:447px;height:424.6px;background:#e0e0e0;border:1px solid #505f80;border-top:0;border-radius:4px 4px 0 0;box-shadow:inset 1px 0 0 #f2f2f2,inset -1px 0 0 #f2f2f2,inset 0 -1px 0 #f2f2f2"></div>
  <div class="abs tb" style="left:626px;top:153.4px;width:447px;height:22.6px;border-radius:4px 4px 0 0;border:1px solid #5d83b4;border-top-color:#62728c;border-bottom:0"></div>
  <div class="abs" id="ttl2" style="left:748px;top:156.8px;width:160px;height:14px;text-align:center"><span>Modifica gruppo</span></div>
  <div class="wb" style="left:1015px;top:158.5px;width:15.5px;height:15.5px"></div>
  <div class="wb" style="left:1033.5px;top:158.5px;width:15.5px;height:15.5px"></div>
  <div class="wb" style="left:1052px;top:158.5px;width:15.5px;height:15.5px"></div>
  <div class="t" style="left:823px;top:184px">Lingua :</div>
  <div class="sunk white" style="left:863px;top:181px;width:175px;height:16.5px;border-color:#9c9c9c #b8b8b8 #b8b8b8 #9c9c9c"></div>
  <div class="t" style="left:866px;top:184px">Lingua default</div>
  <div class="ddb" style="left:1024.5px;top:183px;width:11.5px"></div>
  <div class="sunk" style="left:633px;top:200px;width:111px;height:16px"></div>
  <div class="t" style="left:633.5px;top:202px">Numero elementi : 0</div>
  <div class="abs" style="left:633.5px;top:218.6px;width:405px;height:276px;background:#858385;border:1px solid #111"></div>
  <div class="abs" style="left:634.5px;top:219.6px;width:382.5px;height:13px;background:#e0e0e0;border-bottom:1px solid #222;border-right:1px solid #222"></div>
  <div class="abs" style="left:742px;top:219.6px;width:1px;height:26px;background:#555"></div>
  <div class="t" style="left:636.5px;top:220.6px">Impostazione</div>
  <div class="t" style="left:745px;top:220.6px">Default</div>
  <div class="abs" style="left:634.5px;top:232.5px;width:107.5px;height:13.5px;background:#e0e0e0;border-bottom:1px solid #222"></div>
  <div class="abs" style="left:743px;top:232.5px;width:274px;height:13.5px;background:#aaf0f8;border-bottom:1px solid #222;border-right:1px solid #222;outline:1px dotted #5a6a6c;outline-offset:-2px"></div>
  <div class="btn" style="left:1042px;top:341px;width:21px;height:22px"></div>
  <svg class="abs" style="left:1044px;top:343.5px;width:17px;height:17px;transform:rotate(0deg)" viewBox="0 0 17 17"><path d="M8.5 1 L16 9 H11.8 V16 H5.2 V9 H1Z" fill="#4fd02c" stroke="#2a9a18" stroke-width="1"/><path d="M8.5 3 L13 8 H10.5 V14.5 H6.5 V8 H4Z" fill="#8bf05a" opacity=".7"/></svg>
  <div class="btn" style="left:1042px;top:365px;width:21px;height:22px"></div>
  <svg class="abs" style="left:1044px;top:367.5px;width:17px;height:17px;transform:rotate(180deg)" viewBox="0 0 17 17"><path d="M8.5 1 L16 9 H11.8 V16 H5.2 V9 H1Z" fill="#4fd02c" stroke="#2a9a18" stroke-width="1"/><path d="M8.5 3 L13 8 H10.5 V14.5 H6.5 V8 H4Z" fill="#8bf05a" opacity=".7"/></svg>
  <div class="btn" style="left:635.5px;top:501px;width:79.5px;height:53.5px"></div>
  <div class="t c" style="left:635px;top:541px;width:80px;text-align:center">Aggiungi (F4)</div>
  <div class="btn" style="left:717px;top:501px;width:79.5px;height:53.5px"></div>
  <div class="t c" style="left:716px;top:541px;width:80px;text-align:center">Modifica</div>
  <div class="btn" style="left:798px;top:501px;width:79.5px;height:53.5px"></div>
  <div class="t c" style="left:797px;top:541px;width:80px;text-align:center">Elimina</div>
  <div class="btn" style="left:879.5px;top:501px;width:79.5px;height:53.5px"></div>
  <div class="t c" style="left:878px;top:541px;width:80px;text-align:center">Uscita (ESC)</div>

  <!-- icons w2 + annotations -->
  <svg class="abs" style="left:630.5px;top:158.5px;width:13.5px;height:12.5px"><use href="#i-pal"/></svg>
  <svg class="abs" style="left:1014.7px;top:158.5px;width:57.5px;height:17px" viewBox="0 0 56 16"><rect x="4.5" y="7.4" width="8" height="2" fill="#f6f9fd"/><rect x="23.2" y="5" width="7.2" height="5.4" fill="none" stroke="#f6f9fd" stroke-width="1.1"/><rect x="23.2" y="4.5" width="7.2" height="2" fill="#f6f9fd"/><path d="M42.6 4.6 L47.8 9.8 M47.8 4.6 L42.6 9.8" stroke="#f6f9fd" stroke-width="1.7"/></svg>
  <svg class="abs" style="left:668px;top:516.5px;width:20px;height:15px"><use href="#i-add"/></svg>
  <svg class="abs" style="left:747px;top:509.5px;width:22px;height:25px"><use href="#i-mod"/></svg>
  <svg class="abs" style="left:826px;top:510px;width:24px;height:24px"><use href="#i-x"/></svg>
  <svg class="abs" style="left:909.5px;top:512.5px;width:18.7px;height:18.7px"><use href="#i-exit"/></svg>
  <svg class="abs" style="left:0;top:0;width:1366px;height:696px;pointer-events:none" viewBox="0 0 1366 696"><rect x="437" y="251.8" width="164" height="43.2" fill="none" stroke="#f00" stroke-width="1.5"/><rect x="615" y="488.2" width="129.6" height="79" fill="none" stroke="#f00" stroke-width="1.5"/><path d="M542 304.5 L637 474" stroke="#f00" stroke-width="1"/><path d="M641.6 482.6 L631.2 474.2 L640.4 469.4Z" fill="#f00"/></svg>
</div>
</body>
</html>
